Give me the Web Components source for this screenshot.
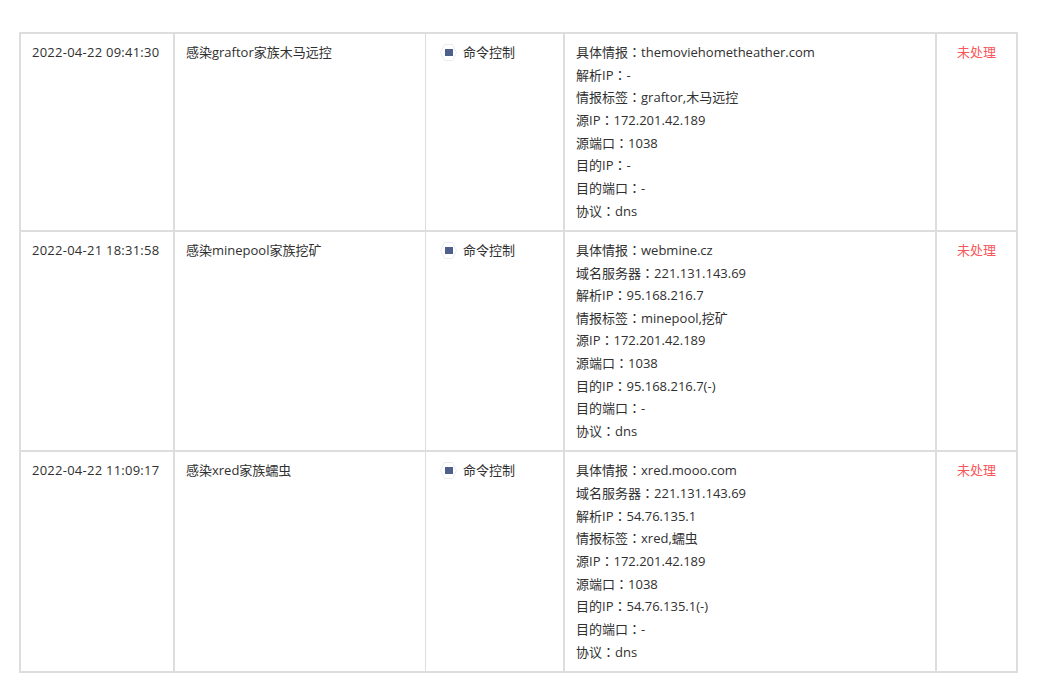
<!DOCTYPE html>
<html><head><meta charset="utf-8">
<style>
html,body{margin:0;padding:0;background:#fff;height:678px;overflow:hidden}
body{font:13px/22.65px "Open Sans","Noto Sans CJK SC",sans-serif;color:#303030}
</style></head><body>
<threat-table>
<threat-row><span slot="time">2022-04-22 09:41:30</span><span slot="name">感染graftor家族木马远控</span><threat-kind slot="kind">命令控制</threat-kind>
<info-line k="具体情报">themoviehometheather.com</info-line><info-line k="解析IP">-</info-line><info-line k="情报标签">graftor,木马远控</info-line><info-line k="源IP">172.201.42.189</info-line><info-line k="源端口">1038</info-line><info-line k="目的IP">-</info-line><info-line k="目的端口">-</info-line><info-line k="协议">dns</info-line><span slot="status">未处理</span></threat-row>
<threat-row><span slot="time">2022-04-21 18:31:58</span><span slot="name">感染minepool家族挖矿</span><threat-kind slot="kind">命令控制</threat-kind>
<info-line k="具体情报">webmine.cz</info-line><info-line k="域名服务器">221.131.143.69</info-line><info-line k="解析IP">95.168.216.7</info-line><info-line k="情报标签">minepool,挖矿</info-line><info-line k="源IP">172.201.42.189</info-line><info-line k="源端口">1038</info-line><info-line k="目的IP">95.168.216.7(-)</info-line><info-line k="目的端口">-</info-line><info-line k="协议">dns</info-line><span slot="status">未处理</span></threat-row>
<threat-row><span slot="time">2022-04-22 11:09:17</span><span slot="name">感染xred家族蠕虫</span><threat-kind slot="kind">命令控制</threat-kind>
<info-line k="具体情报">xred.mooo.com</info-line><info-line k="域名服务器">221.131.143.69</info-line><info-line k="解析IP">54.76.135.1</info-line><info-line k="情报标签">xred,蠕虫</info-line><info-line k="源IP">172.201.42.189</info-line><info-line k="源端口">1038</info-line><info-line k="目的IP">54.76.135.1(-)</info-line><info-line k="目的端口">-</info-line><info-line k="协议">dns</info-line><span slot="status">未处理</span></threat-row>
</threat-table>
<script>
class ThreatTable extends HTMLElement{constructor(){super();this.attachShadow({mode:'open'}).innerHTML=`<style>:host{display:block;box-sizing:border-box;width:999px;margin:32px 0 0 19px;border:2px solid #ddd;border-bottom:0}</style><slot></slot>`}}
class ThreatRow extends HTMLElement{constructor(){super();this.attachShadow({mode:'open'}).innerHTML=`<style>
:host{display:grid;grid-template-columns:154px 251px 139px 372px 79px;border-bottom:2px solid #ddd}
.c{box-sizing:border-box;padding:7px 11px 7.6px;border-right:2px solid #ddd}
.t{white-space:nowrap;letter-spacing:.25px}
.k{padding-left:14px}
.s{border-right:0;text-align:center;color:#f8575a;padding-left:0;padding-right:0}
.b{border-right-width:1px}
</style>
<div class="c t"><slot name="time"></slot></div>
<div class="c b"><slot name="name"></slot></div>
<div class="c k"><slot name="kind"></slot></div>
<div class="c"><slot></slot></div>
<div class="c s"><slot name="status"></slot></div>`}}
class ThreatKind extends HTMLElement{constructor(){super();this.attachShadow({mode:'open'}).innerHTML=`<style>:host{display:flex;align-items:center;gap:6px}svg{flex:none}</style>
<svg width="17" height="17" viewBox="0 0 17 17"><polygon points="4.5,.5 12.5,.5 16.5,8.5 12.5,16.5 4.5,16.5 .5,8.5" fill="#fff" stroke="#e8ebf2"/><rect x="5" y="5" width="8" height="7" fill="#4e5f8c"/></svg><span><slot></slot></span>`}}
class InfoLine extends HTMLElement{constructor(){super();this.attachShadow({mode:'open'}).innerHTML=`<style>:host{display:block}.x{font-family:"Noto Sans CJK TC",sans-serif}</style><span id="k"></span><span class="x">：</span><slot></slot>`;this.shadowRoot.getElementById('k').textContent=this.getAttribute('k')}}
customElements.define('threat-table',ThreatTable);
customElements.define('threat-row',ThreatRow);
customElements.define('threat-kind',ThreatKind);
customElements.define('info-line',InfoLine);
</script></body></html>
